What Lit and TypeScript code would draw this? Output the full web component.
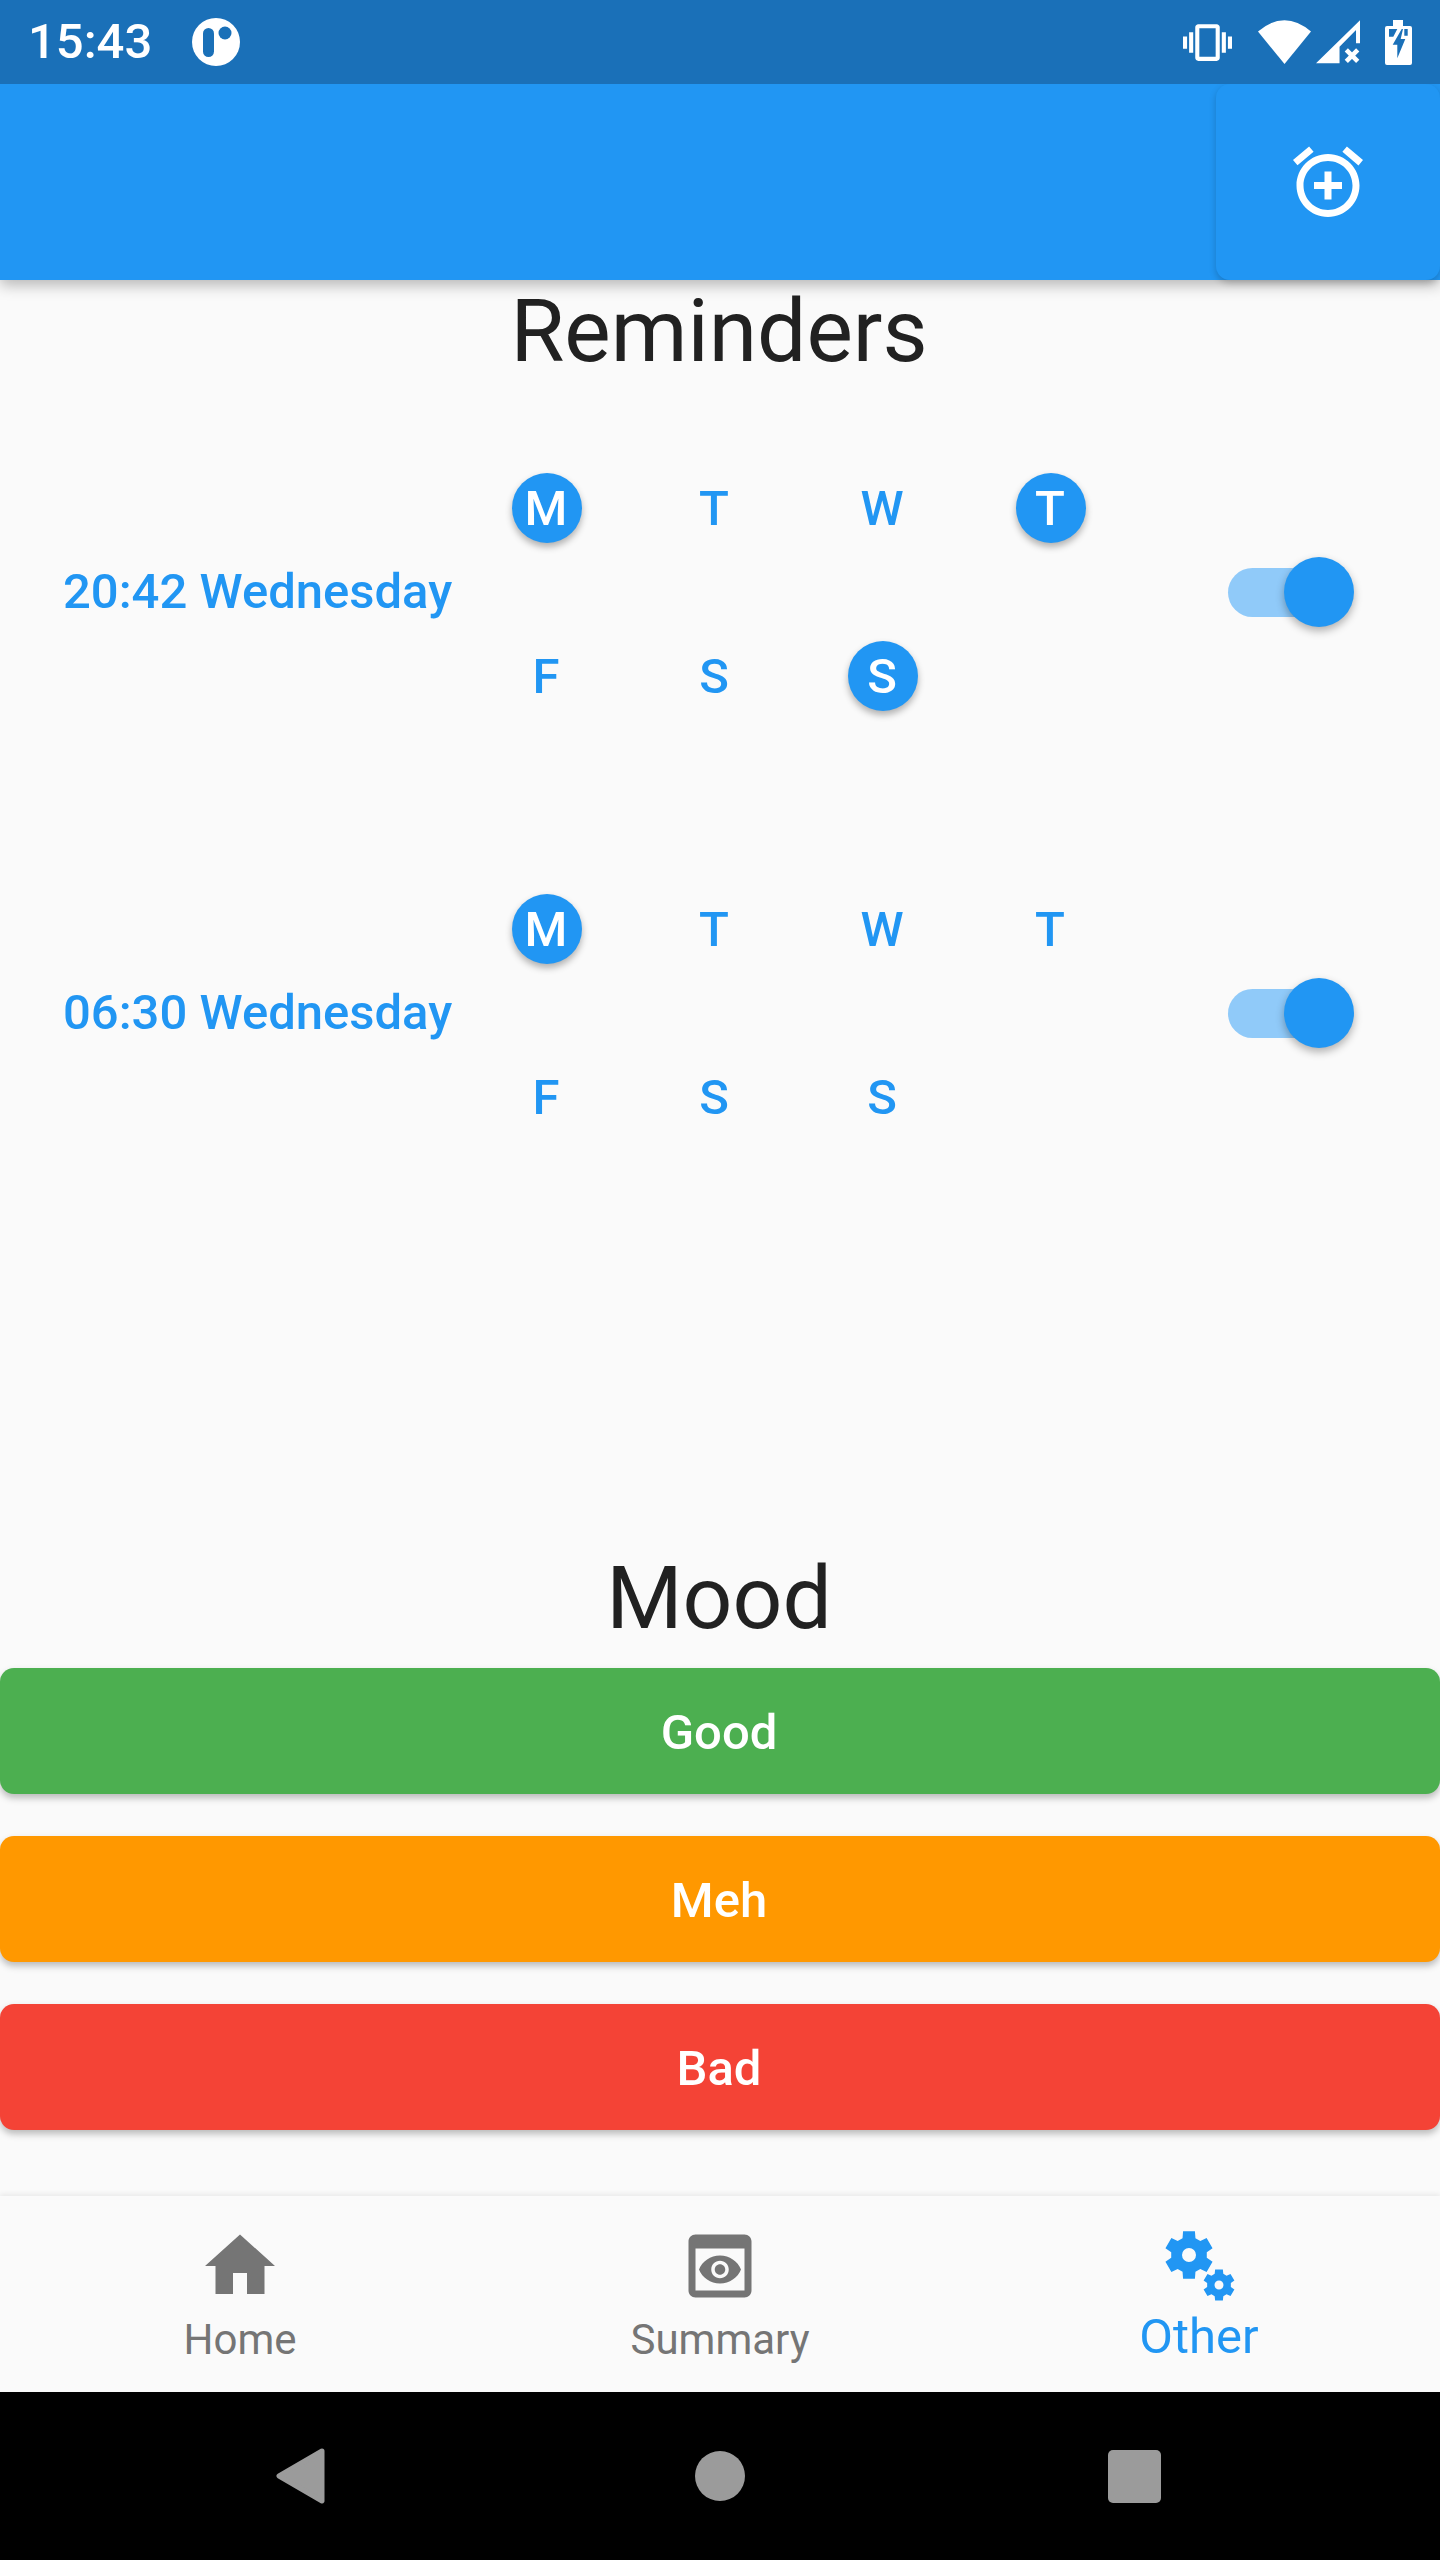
import { LitElement, css, html, svg } from "lit";
import { customElement, property } from "lit/decorators.js";
import { classMap } from "lit/directives/class-map.js";

const DAYS = ["M", "T", "W", "T", "F", "S", "S"];

interface Reminder {
  time: string;
  active: number[];
}

const REMINDERS: Reminder[] = [
  { time: "20:42 Wednesday", active: [0, 3, 6] },
  { time: "06:30 Wednesday", active: [0] },
];

const MOODS = [
  { label: "Good", color: "green" },
  { label: "Meh", color: "orange" },
  { label: "Bad", color: "red" },
];

// six tooth gear, one tooth pointing straight up
function gearPath(cx: number, cy: number, outer: number, root: number, hole: number): string {
  const pt = (r: number, deg: number) => {
    const a = ((deg - 90) * Math.PI) / 180;
    return `${(cx + r * Math.cos(a)).toFixed(2)} ${(cy + r * Math.sin(a)).toFixed(2)}`;
  };
  let d = "";
  for (let i = 0; i < 6; i++) {
    const c = i * 60;
    d += `${i === 0 ? "M" : "L"}${pt(root, c - 21)} L${pt(outer, c - 14)} L${pt(outer, c + 14)} L${pt(root, c + 21)} `;
  }
  d += `Z M${cx - hole} ${cy} a${hole} ${hole} 0 1 0 ${hole * 2} 0 a${hole} ${hole} 0 1 0 ${-hole * 2} 0 Z`;
  return d;
}

@customElement("day-chip")
export class DayChip extends LitElement {
  @property() label = "";
  @property({ type: Boolean }) active = false;

  static styles = css`
    :host {
      display: flex;
      align-items: center;
      justify-content: center;
      height: 168px;
    }
    .chip {
      width: 70px;
      height: 70px;
      box-sizing: border-box;
      padding: 2px 2px 0 0;
      border-radius: 50%;
      display: flex;
      align-items: center;
      justify-content: center;
      font: 500 49px/68px Roboto, sans-serif;
      color: #2196f3;
    }
    .chip.active {
      background: #2196f3;
      color: #fff;
      box-shadow: 0 4px 7px rgba(0, 0, 0, 0.3);
    }
  `;

  protected render() {
    return html`<div class=${classMap({ chip: true, active: this.active })}>${this.label}</div>`;
  }
}

@customElement("reminder-row")
export class ReminderRow extends LitElement {
  @property() time = "";
  @property({ attribute: false }) active: number[] = [];

  static styles = css`
    :host {
      display: flex;
      align-items: center;
      padding-left: 63px;
    }
    .time {
      width: 400px;
      font: 500 49px/58px Roboto, sans-serif;
      color: #2196f3;
    }
    .days {
      display: grid;
      grid-template-columns: repeat(4, 168px);
      width: 672px;
    }
    .switch {
      position: relative;
      width: 116px;
      height: 49px;
      margin-left: 93px;
      border-radius: 25px;
      background: #90caf9;
    }
    .thumb {
      position: absolute;
      left: 56px;
      top: -11px;
      width: 70px;
      height: 70px;
      border-radius: 50%;
      background: #2196f3;
      box-shadow: 0 4px 9px rgba(0, 0, 0, 0.3);
    }
  `;

  protected render() {
    return html`
      <div class="time">${this.time}</div>
      <div class="days">
        ${DAYS.map(
          (d, i) => html`<day-chip .label=${d} .active=${this.active.includes(i)}></day-chip>`
        )}
      </div>
      <div class="switch"><div class="thumb"></div></div>
    `;
  }
}

@customElement("app-root")
export class AppRoot extends LitElement {
  static styles = css`
    :host {
      display: flex;
      flex-direction: column;
      width: 1440px;
      height: 2560px;
      background: #fafafa;
      font-family: Roboto, sans-serif;
      overflow: hidden;
    }
    svg {
      display: block;
      flex: none;
    }

    .status {
      display: flex;
      align-items: center;
      height: 84px;
      padding: 0 28px;
      box-sizing: border-box;
      background: #1a70b8;
      color: #fff;
      position: relative;
      z-index: 3;
    }
    .clock {
      width: 164px;
      font: 500 49px/88px Roboto, sans-serif;
    }
    .spacer {
      flex: 1;
    }
    .vibrate {
      margin-right: 26px;
    }
    .signal {
      margin: 0 25px 0 5px;
    }

    .appbar {
      display: flex;
      justify-content: flex-end;
      height: 196px;
      flex: none;
      background: #2196f3;
      box-shadow: 0 5px 14px rgba(0, 0, 0, 0.28);
      position: relative;
      z-index: 2;
    }
    .action {
      display: flex;
      align-items: center;
      justify-content: center;
      width: 224px;
      border-radius: 14px;
      background: #2196f3;
      box-shadow: 0 3px 7px rgba(0, 0, 0, 0.2);
    }

    .body {
      flex: 1;
      display: flex;
      flex-direction: column;
    }
    h1 {
      margin: 0;
      padding-right: 2px;
      font: 400 87.5px/98px Roboto, sans-serif;
      color: #212121;
      text-align: center;
    }
    .reminders-title {
      margin-top: 2px;
    }
    .reminders {
      display: flex;
      flex-direction: column;
      gap: 85px;
      margin-top: 44px;
    }
    .mood-title {
      margin-top: auto;
    }
    .moods {
      display: flex;
      flex-direction: column;
      gap: 42px;
      margin: 21px 0 66px;
    }
    .mood {
      height: 126px;
      box-sizing: border-box;
      padding: 3px 2px 0 0;
      border-radius: 14px;
      display: flex;
      align-items: center;
      justify-content: center;
      font: 500 49px/58px Roboto, sans-serif;
      color: #fff;
      box-shadow: 0 4px 7px rgba(0, 0, 0, 0.26);
    }
    .green {
      background: #4caf50;
    }
    .orange {
      background: #ff9800;
    }
    .red {
      background: #f44336;
    }

    .tabs {
      display: grid;
      grid-template-columns: repeat(3, 480px);
      height: 196px;
      flex: none;
      background: #fafafa;
      box-shadow: 0 -2px 5px rgba(0, 0, 0, 0.07);
    }
    .tab {
      display: flex;
      flex-direction: column;
      align-items: center;
      padding-top: 28px;
      color: #757575;
      font: 400 42px/56px Roboto, sans-serif;
    }
    .tab span {
      margin-top: 4px;
    }
    .tab.on {
      color: #2196f3;
      font-size: 49px;
    }
    .tab.on span {
      margin: 1px 2px 0 0;
    }

    .navbar {
      display: flex;
      align-items: center;
      height: 168px;
      flex: none;
      padding-left: 276px;
      background: #000;
    }
    .home-key {
      width: 50px;
      height: 50px;
      margin-left: 370px;
      border-radius: 50%;
      background: #9b9b9b;
    }
    .recent-key {
      width: 53px;
      height: 53px;
      margin-left: 363px;
      border-radius: 5px;
      background: #9b9b9b;
    }
  `;

  private renderStatus() {
    return html`
      <div class="status">
        <div class="clock">15:43</div>
        <svg width="48" height="48" viewBox="0 0 48 48">
          <circle cx="24" cy="24" r="24" fill="#fff"></circle>
          <rect x="11" y="10" width="11" height="29" rx="5.5" fill="#1a70b8"></rect>
          <circle cx="33" cy="15" r="6.5" fill="#1a70b8"></circle>
        </svg>
        <div class="spacer"></div>
        <svg class="vibrate" width="49" height="49" viewBox="0 0 24 24" fill="#fff">
          <path
            d="M0 15h2V9H0v6zm3 2h2V7H3v10zm19-8v6h2V9h-2zm-3 8h2V7h-2v10zM16.5 3h-9C6.67 3 6 3.67 6 4.5v15c0 .83.67 1.5 1.5 1.5h9c.83 0 1.5-.67 1.5-1.5v-15c0-.83-.67-1.5-1.5-1.5zM16 19H8V5h8v14z"
          ></path>
        </svg>
        <svg width="53" height="44" viewBox="0 0 53 44" fill="#fff">
          <path d="M0 11.5Q26.5-11 53 11.5L26.5 44Z"></path>
        </svg>
        <svg class="signal" width="44" height="44" viewBox="0 0 44.3 44" fill="#fff">
          <path d="M0 43.3 44.3 0V23.3H40.3V10L23.7 26.7V43.3Z"></path>
          <path
            d="M30.5 30 42 41.5M42 30 30.5 41.5"
            stroke="#fff"
            stroke-width="4.6"
            fill="none"
          ></path>
        </svg>
        <svg width="27" height="45" viewBox="0 0 27 45">
          <path
            fill="#fff"
            d="M8 0h10v6h7a2 2 0 0 1 2 2v35a2 2 0 0 1-2 2H2a2 2 0 0 1-2-2V8a2 2 0 0 1 2-2h6Z"
          ></path>
          <path
            fill="#1a70b8"
            d="M4 9H12.3L8.3 16.7H4ZM19.3 9H22.7V15.7H19.3ZM16.7 9 7.7 24.7H12.3V38.3L20.3 19H15.7L18 9Z"
          ></path>
        </svg>
      </div>
    `;
  }

  private renderTabs() {
    return html`
      <div class="tabs">
        <div class="tab">
          <svg width="84" height="84" viewBox="0 0 24 24" fill="#757575">
            <path d="M10 20v-6h4v6h5v-8h3L12 3 2 12h3v8z"></path>
          </svg>
          <span>Home</span>
        </div>
        <div class="tab">
          <svg width="84" height="84" viewBox="0 0 24 24" fill="#757575">
            <path
              d="M19 3H5C3.89 3 3 3.9 3 5v14c0 1.1.89 2 2 2h14c1.1 0 2-.9 2-2V5C21 3.9 20.11 3 19 3zM19 19H5V7h14V19zM13.5 13c0 .83-.67 1.5-1.5 1.5s-1.5-.67-1.5-1.5c0-.83.67-1.5 1.5-1.5S13.5 12.17 13.5 13zM12 9c-2.73 0-5.06 1.66-6 4 .94 2.34 3.27 4 6 4s5.06-1.66 6-4C17.06 10.66 14.73 9 12 9zM12 15.5c-1.38 0-2.5-1.12-2.5-2.5 0-1.38 1.12-2.5 2.5-2.5 1.38 0 2.5 1.12 2.5 2.5C14.5 14.38 13.38 15.5 12 15.5z"
            ></path>
          </svg>
          <span>Summary</span>
        </div>
        <div class="tab on">
          <svg width="84" height="84" viewBox="0 0 84 84" fill="#2196f3">
            ${svg`<path fill-rule="evenodd" d=${gearPath(31, 31, 24.5, 18, 7)}></path>`}
            ${svg`<path fill-rule="evenodd" d=${gearPath(61, 61, 16, 12, 4.5)}></path>`}
          </svg>
          <span>Other</span>
        </div>
      </div>
    `;
  }

  protected render() {
    return html`
      ${this.renderStatus()}
      <div class="appbar">
        <div class="action">
          <svg width="84" height="84" viewBox="0 0 24 24" fill="#fff">
            <path
              d="M7.88 3.39L6.6 1.86 2 5.71l1.29 1.53 4.59-3.85zM22 5.72l-4.6-3.86-1.29 1.53 4.6 3.86L22 5.72zM12 4c-4.97 0-9 4.03-9 9s4.02 9 9 9c4.97 0 9-4.03 9-9s-4.03-9-9-9zm0 16c-3.87 0-7-3.13-7-7s3.13-7 7-7 7 3.13 7 7-3.13 7-7 7zm1-11h-2v3H8v2h3v3h2v-3h3v-2h-3V9z"
            ></path>
          </svg>
        </div>
      </div>
      <div class="body">
        <h1 class="reminders-title">Reminders</h1>
        <div class="reminders">
          ${REMINDERS.map(
            (r) => html`<reminder-row .time=${r.time} .active=${r.active}></reminder-row>`
          )}
        </div>
        <h1 class="mood-title">Mood</h1>
        <div class="moods">
          ${MOODS.map((m) => html`<div class="mood ${m.color}">${m.label}</div>`)}
        </div>
      </div>
      ${this.renderTabs()}
      <div class="navbar">
        <svg width="49" height="56" viewBox="0 0 49 56">
          <path
            d="M46 3 3 28 46 53Z"
            fill="#9b9b9b"
            stroke="#9b9b9b"
            stroke-width="5"
            stroke-linejoin="round"
          ></path>
        </svg>
        <div class="home-key"></div>
        <div class="recent-key"></div>
      </div>
    `;
  }
}
